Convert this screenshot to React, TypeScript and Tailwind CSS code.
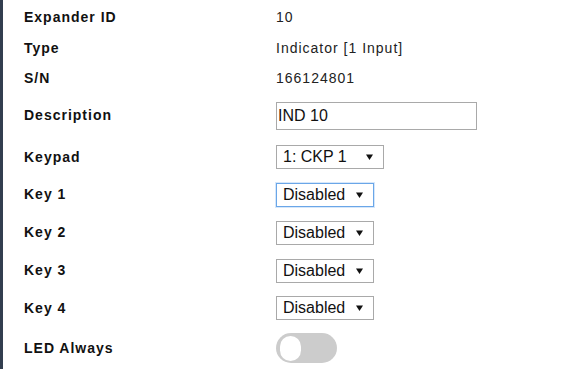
import React from "react";

const Arrow = () => (
  <svg width="7" height="6" viewBox="0 0 7 6" className="absolute right-[10px] top-1/2 -translate-y-1/2">
    <polygon points="0,0.5 7,0.5 3.5,6" fill="#111" />
  </svg>
);

function Select({ value, width, focused }: { value: string; width: string; focused?: boolean }) {
  return (
    <div
      className={
        "relative flex h-[24px] items-center border bg-white pl-[6px] text-[16px] tracking-normal text-[#111] " +
        width +
        (focused ? " border-[#6aa6e8] shadow-[0_0_0_1px_#d6e7fa]" : " border-[#a9a9a9]")
      }
    >
      <span className="leading-none">{value}</span>
      <Arrow />
    </div>
  );
}

function Row({ label, h, children }: { label: string; h: string; children?: React.ReactNode }) {
  return (
    <div className={"flex items-center " + h}>
      <div className="w-[252px] text-[14px] font-bold tracking-[1px] text-[#111]">{label}</div>
      <div className="flex items-center text-[14px] tracking-[1px] text-[#222]">{children}</div>
    </div>
  );
}

export default function App() {
  return (
    <div className="flex h-[369px] w-[583px] overflow-hidden bg-white" style={{ fontFamily: '"Liberation Sans", Arial, sans-serif' }}>
      <div className="w-[3px] shrink-0 bg-[#323e4f]" />
      <div className="flex flex-1 flex-col pl-[21px] pt-[3px]">
        <Row label="Expander ID" h="h-[30px]">10</Row>
        <Row label="Type" h="h-[31px]">Indicator [1 Input]</Row>
        <Row label="S/N" h="h-[30px]">166124801</Row>
        <Row label="Description" h="h-[45px]">
          <input
            defaultValue="IND 10"
            readOnly
            className="h-[28px] w-[201px] border border-[#a9a9a9] bg-white pl-[1px] text-[16px] tracking-normal text-[#111] outline-none"
          />
        </Row>
        <Row label="Keypad" h="h-[38px]">
          <Select value="1: CKP 1" width="w-[108px]" />
        </Row>
        <Row label="Key 1" h="h-[38px]">
          <Select value="Disabled" width="w-[98px]" focused />
        </Row>
        <Row label="Key 2" h="h-[38px]">
          <Select value="Disabled" width="w-[98px]" />
        </Row>
        <Row label="Key 3" h="h-[38px]">
          <Select value="Disabled" width="w-[98px]" />
        </Row>
        <Row label="Key 4" h="h-[38px]">
          <Select value="Disabled" width="w-[98px]" />
        </Row>
        <Row label="LED Always" h="h-[42px]">
          <div className="flex h-[30px] w-[61px] items-center rounded-full bg-[#cccccc] pl-[4px]">
            <div className="h-[25px] w-[21px] rounded-full bg-white" />
          </div>
        </Row>
      </div>
    </div>
  );
}
